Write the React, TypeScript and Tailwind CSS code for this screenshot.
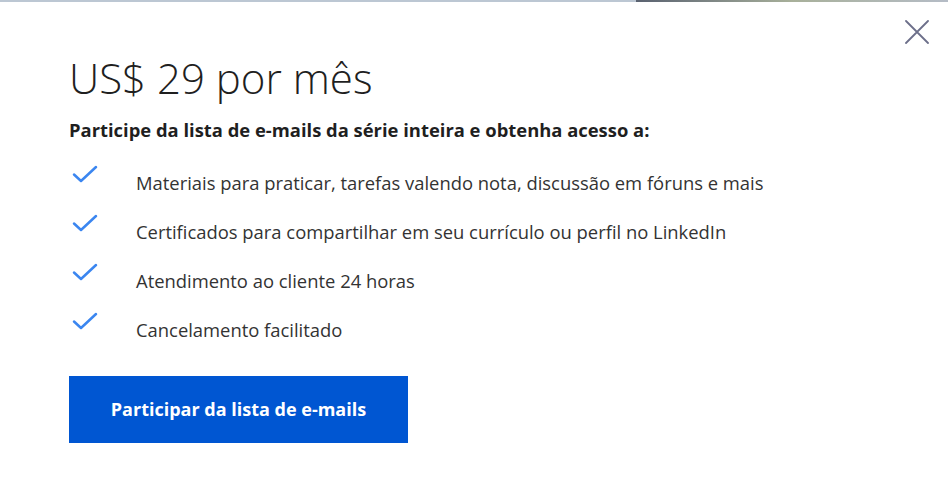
import React from "react";

const features = [
  "Materiais para praticar, tarefas valendo nota, discussão em fóruns e mais",
  "Certificados para compartilhar em seu currículo ou perfil no LinkedIn",
  "Atendimento ao cliente 24 horas",
  "Cancelamento facilitado",
];

function Check() {
  return (
    <svg width="26" height="20" viewBox="0 0 26 20" fill="none">
      <path d="M2 10.5 L9 17 L24 3" stroke="#3b86f0" strokeWidth="2.5" strokeLinecap="round" strokeLinejoin="round" />
    </svg>
  );
}

export default function App() {
  return (
    <div className="w-[948px] h-[500px] bg-white overflow-hidden relative" style={{ fontFamily: '"Open Sans", "Noto Sans", sans-serif' }}>
      {/* page behind the dialog peeking through at the top */}
      <div className="h-[2px] w-full flex">
        <div className="w-[636px] bg-[#bcc7d3]" />
        <div className="flex-1 bg-gradient-to-r from-[#5a6270] via-[#a8b09a] to-[#b5bcc6]" />
      </div>

      <button className="absolute left-[905px] top-[20px] w-[24px] h-[24px] flex items-center justify-center">
        <svg width="24" height="24" viewBox="0 0 24 24" fill="none">
          <path d="M1 1 L23 23 M23 1 L1 23" stroke="#6c6f8a" strokeWidth="1.8" strokeLinecap="round" />
        </svg>
      </button>

      <div className="pl-[69px] pt-[50px]">
        <h1 className="text-[42px] leading-[52px] font-light text-[#1f1f1f]">US$ 29 por mês</h1>
        <p className="mt-[14px] text-[18.4px] leading-[24px] font-bold text-[#1f1f1f]">
          Participe da lista de e-mails da série inteira e obtenha acesso a:
        </p>
        <ul className="mt-[22px] flex flex-col gap-[17px]">
          {features.map((f) => (
            <li key={f} className="flex items-start">
              <span className="w-[67px] shrink-0 pl-[3px] mt-0">
                <Check />
              </span>
              <span className="pt-[6px] text-[18.4px] leading-[26px] text-[#333333]">{f}</span>
            </li>
          ))}
        </ul>
        <button className="mt-[33px] w-[339px] h-[67px] bg-[#0056d2] text-white text-[18px] font-bold flex items-center justify-center">
          Participar da lista de e-mails
        </button>
      </div>
    </div>
  );
}
